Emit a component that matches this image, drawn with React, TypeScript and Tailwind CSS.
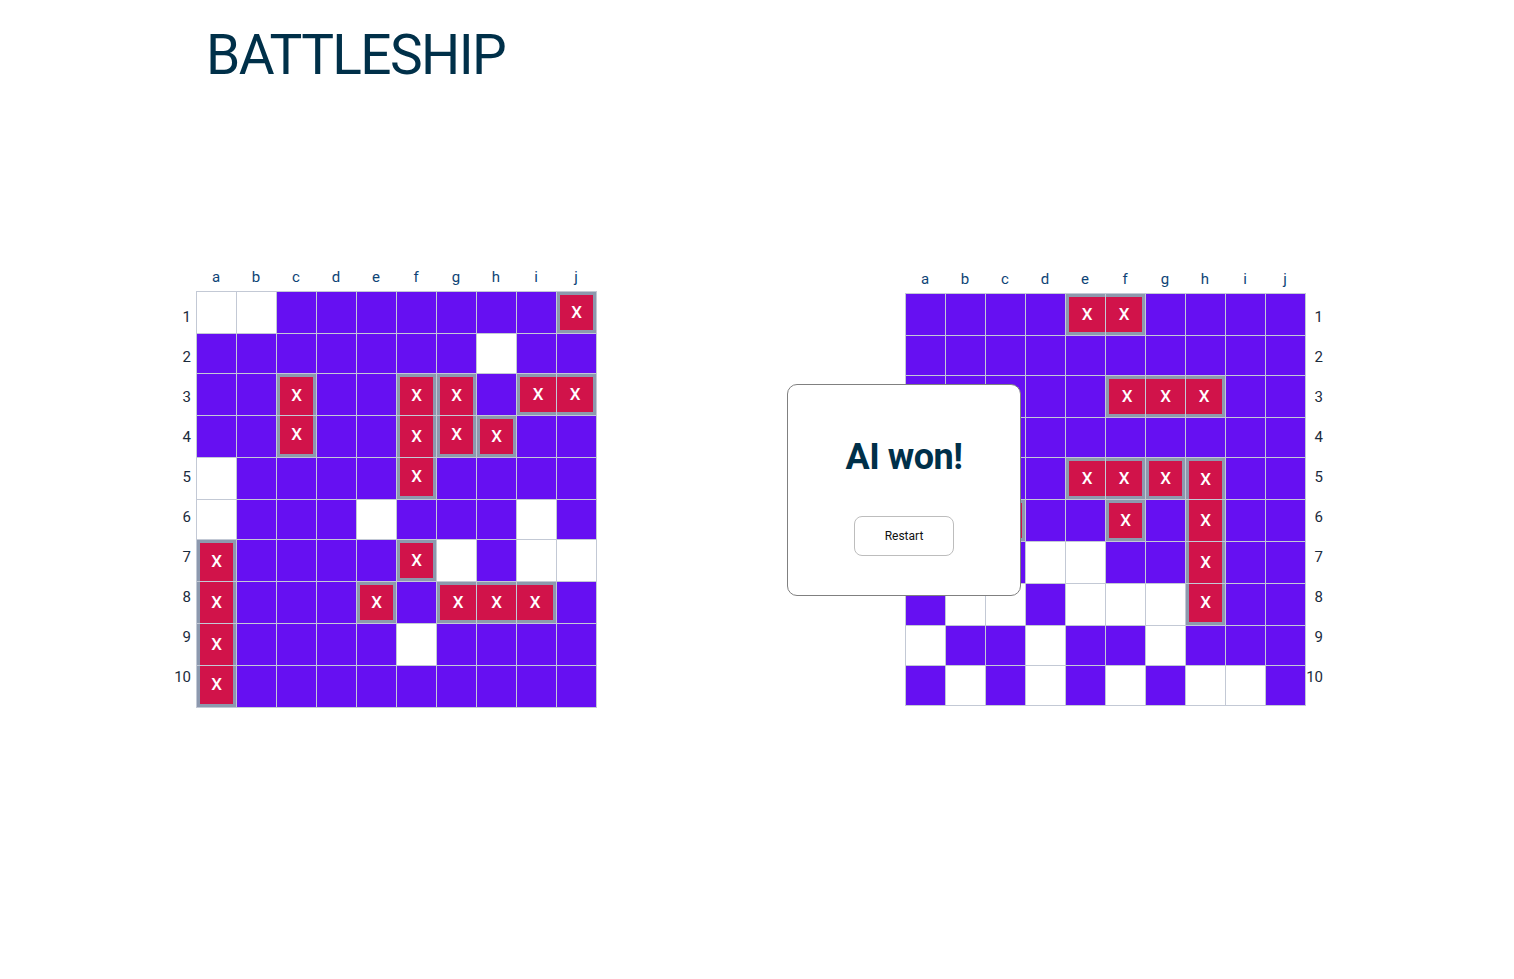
const COLS = ["a", "b", "c", "d", "e", "f", "g", "h", "i", "j"];

// "." water, "o" miss, capital letter = hit, same letter = same ship
const playerBoard = [
  "oo.......A",
  ".......o..",
  "..B..CD.EE",
  "..B..CDF..",
  "o....C....",
  "o...o...o.",
  "G....Ho.oo",
  "G...I.JJJ.",
  "G....o....",
  "G.........",
];

const aiBoard = [
  "....AA....",
  "..........",
  ".....BBB..",
  "..........",
  "....CCDE..",
  "..F..G.E..",
  "...oo..E..",
  ".oo.oooE..",
  "o..o..o...",
  ".o.o.o.oo.",
];

const isHit = (ch: string) => ch >= "A" && ch <= "Z";

const Cell = ({ board, r, c }: { board: string[]; r: number; c: number }) => {
  const ch = board[r][c];

  if (ch === ".") {
    return <div className="h-full w-[40px] border-r border-b border-[#c3c9d5] bg-[#6610f2]" />;
  }
  if (ch === "o") {
    return <div className="h-full w-[40px] border-r border-b border-[#c3c9d5] bg-white" />;
  }

  const top = r === 0 || board[r - 1][c] !== ch;
  const bottom = r === 9 || board[r + 1][c] !== ch;
  const left = c === 0 || board[r][c - 1] !== ch;
  const right = c === 9 || board[r][c + 1] !== ch;

  return (
    <div className="h-full w-[40px] border-r border-b border-[#c3c9d5] bg-[#d1134a]">
      <div
        className={`flex h-full w-full items-center justify-center border-[#8d99ae] text-[17px] font-medium text-white ${
          top ? "border-t-[3px]" : ""
        } ${bottom ? "border-b-[3px]" : ""} ${left ? "border-l-[3px]" : ""} ${
          right ? "border-r-[3px]" : ""
        }`}
      >
        X
      </div>
    </div>
  );
};

const Grid = ({ board }: { board: string[] }) => (
  <div className="flex flex-col border-t border-l border-[#c3c9d5]">
    {board.map((row, r) => (
      <div
        key={r}
        className={`flex ${row.split("").some(isHit) ? "h-[42px]" : "h-[40px]"}`}
      >
        {row.split("").map((_, c) => (
          <Cell key={c} board={board} r={r} c={c} />
        ))}
      </div>
    ))}
  </div>
);

const ColLetters = () => (
  <div className="flex">
    {COLS.map((l) => (
      <div key={l} className="w-[40px] text-center text-[15px] text-[#0d4476]">
        {l}
      </div>
    ))}
  </div>
);

const RowNumbers = ({ align }: { align: "left" | "right" }) => (
  <div className={`flex flex-col ${align === "left" ? "w-[26px] pt-[6px] pr-[5px] text-right" : "w-[17px] pt-[4px] text-right"}`}>
    {Array.from({ length: 10 }, (_, i) => (
      <div key={i} className="flex h-[40px] items-center justify-end text-[15px] text-[#1b2b3c]">
        {i + 1}
      </div>
    ))}
  </div>
);

const App = () => {
  return (
    <div className="min-h-screen w-full bg-white font-['Roboto',sans-serif]">
      <h1 className="pt-[28px] pl-[206px] text-[55px] leading-none font-normal tracking-[-1.6px] text-[#003049]">
        BATTLESHIP
      </h1>

      <div className="mt-[181px] flex items-start">
        {/* player board */}
        <div className="ml-[170px] flex flex-col">
          <div className="flex h-[27px] items-center pl-[26px]">
            <ColLetters />
          </div>
          <div className="flex">
            <RowNumbers align="left" />
            <Grid board={playerBoard} />
          </div>
        </div>

        {/* ai board */}
        <div className="relative mt-[2px] ml-[308px] flex flex-col">
          <div className="flex h-[27px] items-center">
            <ColLetters />
          </div>
          <div className="flex">
            <Grid board={aiBoard} />
            <RowNumbers align="right" />
          </div>

          <div className="absolute top-[118px] left-[-118px] flex h-[212px] w-[234px] flex-col items-center rounded-[10px] border border-[#808080] bg-white">
            <div className="pt-[54px] text-[36px] leading-none font-bold tracking-[-0.5px] text-[#003049]">
              AI won!
            </div>
            <button className="mt-[41px] flex h-[40px] w-[100px] items-center justify-center rounded-[8px] border border-[#bdbdbd] bg-white text-[12px] text-[#111]">
              Restart
            </button>
          </div>
        </div>
      </div>
    </div>
  );
};

export default App;
